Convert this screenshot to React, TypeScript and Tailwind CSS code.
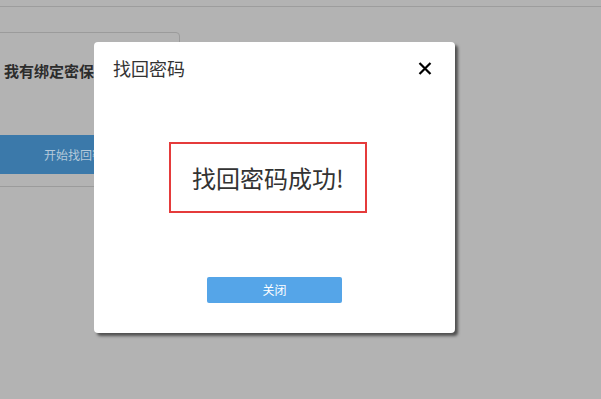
import React from 'react';

const font = { fontFamily: '"Noto Sans CJK SC", "Noto Sans", sans-serif' };

const App: React.FC = () => {
  return (
    <div className="relative h-[399px] w-[601px] overflow-hidden bg-[#b3b3b3]" style={font}>
      {/* page behind the mask */}
      <div className="h-[7px] border-b border-[#9d9d9d]" />
      <div className="mt-[25px] ml-[-1px] h-[155px] w-[181px] rounded-tr-[4px] border border-[#9b9b9b] bg-[#b3b3b3]">
        <div className="w-[94px] overflow-hidden pt-[25px] pl-[4px] text-[15px] font-bold leading-[26px] whitespace-nowrap text-[#2c2c2c]">
          我有绑定密保问题
        </div>
        <div className="mt-[51px] flex h-[39px] items-center bg-[#3b79aa] pl-[44px]">
          <span className="w-[50px] overflow-hidden text-[12px] whitespace-nowrap text-[#b5cadb]">开始找回密码</span>
        </div>
      </div>

      {/* dialog */}
      <div className="absolute top-[42px] left-[94px] flex h-[291px] w-[361px] flex-col rounded-[4px] bg-white shadow-[3px_3px_3px_rgba(0,0,0,0.55)]">
        <div className="flex items-center justify-between px-[19px] pt-[13px]">
          <span className="text-[18px] leading-[27px] text-[#333]">找回密码</span>
          <svg width="14" height="13" viewBox="0 0 14 13" className="mr-[4px] mt-[-1px]">
            <path d="M1.5 1 L12.5 12 M12.5 1 L1.5 12" stroke="#000" strokeWidth="2.2" />
          </svg>
        </div>
        <div className="mt-[60px] ml-[75px] flex h-[71px] w-[198px] items-center justify-center border-2 border-[#e53b3b]">
          <span className="text-[24px] leading-none text-[#333]">找回密码成功!</span>
        </div>
        <button className="mt-[64px] ml-[113px] h-[26px] w-[135px] rounded-[2px] bg-[#55a5e8] text-[12px] text-white">
          关闭
        </button>
      </div>
    </div>
  );
};

export default App;
